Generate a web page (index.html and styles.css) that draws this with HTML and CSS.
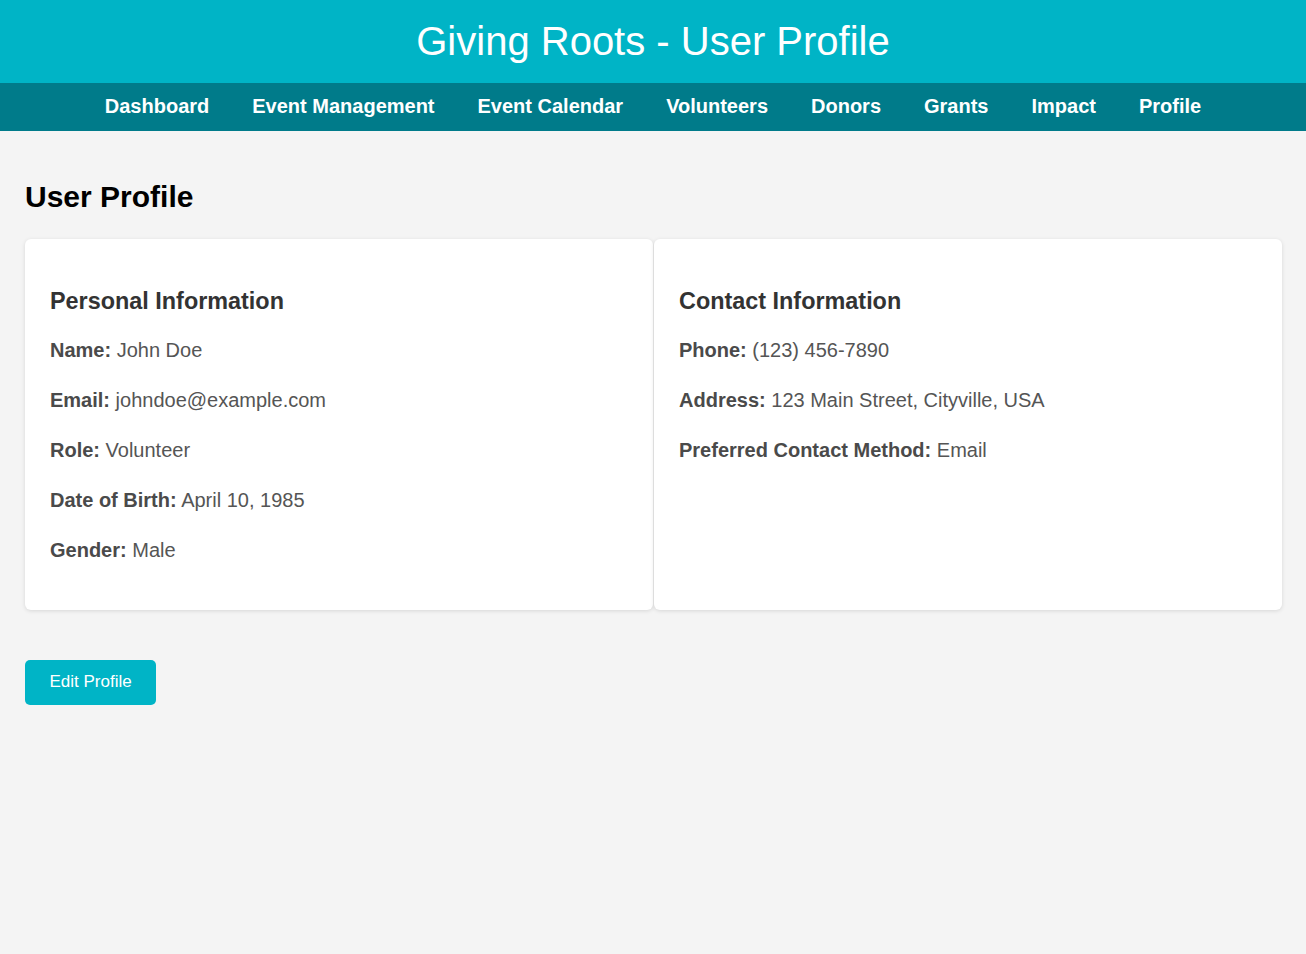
FILE: index.html
```html
<!DOCTYPE html>
<html lang="en">
<head>
<meta charset="utf-8">
<title>Giving Roots - User Profile</title>
<link rel="stylesheet" href="styles.css">
</head>
<body>
<header class="site-header">
  <h1 class="site-title">Giving Roots - User Profile</h1>
</header>
<nav class="main-nav">
  <a href="#">Dashboard</a>
  <a href="#">Event Management</a>
  <a href="#">Event Calendar</a>
  <a href="#">Volunteers</a>
  <a href="#">Donors</a>
  <a href="#">Grants</a>
  <a href="#">Impact</a>
  <a href="#">Profile</a>
</nav>
<main class="content">
  <h2 class="page-title">User Profile</h2>
  <div class="cards">
    <section class="card">
      <h3>Personal Information</h3>
      <p><strong>Name:</strong> John Doe</p>
      <p><strong>Email:</strong> johndoe@example.com</p>
      <p><strong>Role:</strong> Volunteer</p>
      <p><strong>Date of Birth:</strong> April 10, 1985</p>
      <p><strong>Gender:</strong> Male</p>
    </section>
    <section class="card">
      <h3>Contact Information</h3>
      <p><strong>Phone:</strong> (123) 456-7890</p>
      <p><strong>Address:</strong> 123 Main Street, Cityville, USA</p>
      <p><strong>Preferred Contact Method:</strong> Email</p>
    </section>
  </div>
  <button class="btn">Edit Profile</button>
</main>
</body>
</html>
```

FILE: styles.css
```css
* { box-sizing: border-box; }

body {
  margin: 0;
  background: #f4f4f4;
  font-family: "Liberation Sans", Arial, sans-serif;
  color: #333;
}

.site-header {
  background: #00b4c6;
  height: 83px;
  display: flex;
  align-items: center;
  justify-content: center;
  padding-bottom: 1px;
}

.site-title {
  margin: 0;
  color: #fff;
  font-size: 40px;
  font-weight: normal;
  line-height: 46px;
}

.main-nav {
  background: #007b8a;
  height: 48px;
  display: flex;
  align-items: center;
  justify-content: center;
  gap: 43px;
  padding-bottom: 2px;
}

.main-nav a {
  color: #fff;
  text-decoration: none;
  font-weight: bold;
  font-size: 20px;
  line-height: 23px;
}

.content {
  padding: 25px 24px 25px 25px;
}

.page-title {
  margin: 25px 0 26px;
  font-size: 30px;
  line-height: 32px;
  color: #000;
}

.cards {
  display: grid;
  grid-template-columns: 1fr 1fr;
  gap: 1px;
}

.card {
  background: #fff;
  border-radius: 6px;
  box-shadow: 0 1px 4px rgba(0, 0, 0, 0.12);
  padding: 25px;
}

.card h3 {
  margin: 23px 0 20px;
  font-size: 23.4px;
  line-height: 28px;
  color: #333;
}

.card p {
  margin: 20px 0;
  font-size: 20px;
  line-height: 30px;
  color: #555;
}

.card strong { color: #4a4a4a; }

.btn {
  margin-top: 50px;
  background: #00b4c6;
  color: #fff;
  border: none;
  border-radius: 5px;
  font-family: "Liberation Sans", Arial, sans-serif;
  font-size: 17px;
  line-height: 21px;
  padding: 11px 24.5px 13px;
  cursor: pointer;
}
```
